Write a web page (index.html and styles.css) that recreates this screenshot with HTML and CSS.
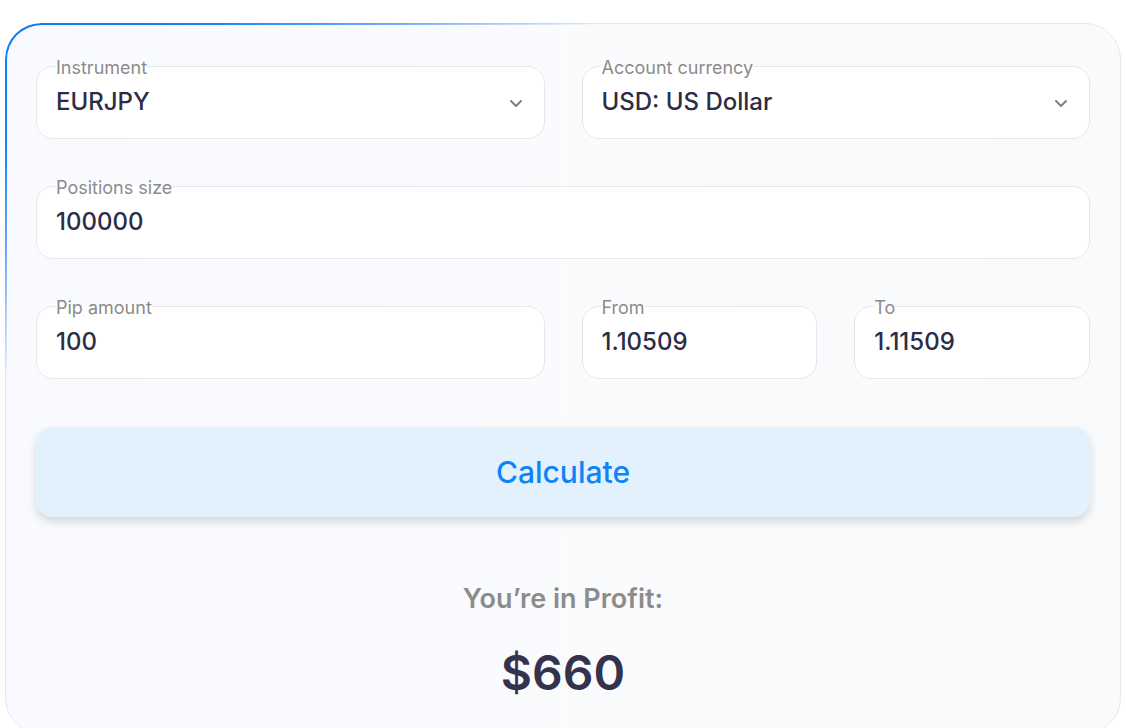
FILE: index.html
```html
<!DOCTYPE html>
<html lang="en">
<head>
<meta charset="utf-8">
<title>Pip Calculator</title>
<link rel="stylesheet" href="styles.css">
</head>
<body>
<div class="card">
  <div class="grid">
    <fieldset class="field half">
      <legend class="label">Instrument</legend>
      <div class="value select">
        <span>EURJPY</span>
        <svg class="chev" width="14" height="9" viewBox="0 0 14 9"><polyline points="2,2 7,7 12,2" fill="none" stroke="#7b7f88" stroke-width="2" stroke-linecap="round" stroke-linejoin="round"/></svg>
      </div>
    </fieldset>
    <fieldset class="field half">
      <legend class="label">Account currency</legend>
      <div class="value select">
        <span>USD: US Dollar</span>
        <svg class="chev" width="14" height="9" viewBox="0 0 14 9"><polyline points="2,2 7,7 12,2" fill="none" stroke="#7b7f88" stroke-width="2" stroke-linecap="round" stroke-linejoin="round"/></svg>
      </div>
    </fieldset>
    <fieldset class="field full">
      <legend class="label">Positions size</legend>
      <div class="value">100000</div>
    </fieldset>
    <fieldset class="field half">
      <legend class="label">Pip amount</legend>
      <div class="value">100</div>
    </fieldset>
    <fieldset class="field quarter">
      <legend class="label">From</legend>
      <div class="value">1.10509</div>
    </fieldset>
    <fieldset class="field quarter">
      <legend class="label">To</legend>
      <div class="value">1.11509</div>
    </fieldset>
  </div>
  <button class="calc" type="button">Calculate</button>
  <div class="result">
    <div class="result-title">You’re in Profit:</div>
    <div class="result-value">$660</div>
  </div>
</div>
</body>
</html>
```
FILE: styles.css
```css
* { box-sizing: border-box; }
html, body { margin: 0; padding: 0; background: #ffffff; }
body {
  font-family: Inter, "Noto Sans", sans-serif;
  padding: 23px 5px 0 5px;
  height: 728px;
  overflow: hidden;
}
.card {
  position: relative;
  width: 1116px;
  border: 1px solid #e6e8ec;
  border-radius: 36px;
  background: linear-gradient(90deg, #f8faff 0%, #fafbfd 50%, #f9fafc 100%);
  padding: 32px 30px 30px 30px;
}
.card::before {
  content: "";
  position: absolute;
  inset: -1px;
  border-radius: 36px;
  padding: 1.5px;
  background: radial-gradient(ellipse 700px 420px at 0 0, #0a7bff 0%, #1a84fb 30%, rgba(70,145,250,0.75) 55%, rgba(120,170,240,0) 85%);
  -webkit-mask: linear-gradient(#000 0 0) content-box, linear-gradient(#000 0 0);
  -webkit-mask-composite: xor;
  mask-composite: exclude;
  pointer-events: none;
}
.grid {
  display: grid;
  grid-template-columns: repeat(4, 1fr);
  column-gap: 37px;
  row-gap: 37px;
}
.half { grid-column: span 2; }
.full { grid-column: span 4; }
.quarter { grid-column: span 1; }
.field {
  margin: 0;
  min-width: 0;
  padding: 0 21px 0 19px;
  border: 1px solid #e6e7ea;
  border-radius: 17px;
  background: #ffffff;
}
.label {
  padding: 4px 0 0 0;
  margin-left: 0;
  font-size: 18px;
  line-height: 16px;
  color: #8b8b8b;
  font-weight: 400;
}
.value {
  margin-top: 13px;
  margin-bottom: 23px;
  font-size: 24px;
  line-height: 26px;
  font-weight: 500;
  color: #2c2c46;
}
.select {
  display: flex;
  align-items: center;
  justify-content: space-between;
}
.chev { display: block; margin-top: 2px; }
.calc {
  display: block;
  width: 100%;
  height: 90px;
  margin-top: 48px;
  border: none;
  border-radius: 17px;
  background: #e3f1fd;
  color: #0d84f7;
  font-family: Inter, "Noto Sans", sans-serif;
  font-size: 30px;
  font-weight: 500;
  box-shadow: 0 5px 10px rgba(0, 0, 0, 0.14);
}
.result {
  text-align: center;
  margin-top: 67px;
}
.result-title {
  font-size: 27px;
  line-height: 30px;
  font-weight: 600;
  color: #8c8c8c;
}
.result-value {
  margin-top: 29px;
  font-size: 48px;
  line-height: 60px;
  font-weight: 600;
  color: #33334e;
}
```
